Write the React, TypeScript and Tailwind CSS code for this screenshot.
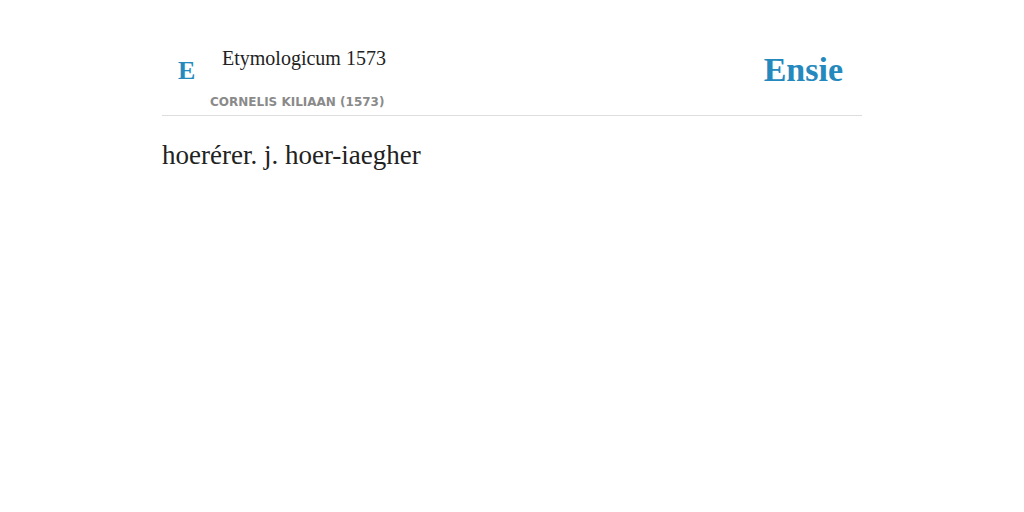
export default function App() {
  return (
    <div className="min-h-[512px] bg-white">
      <div className="mx-auto w-[700px] pt-[40px]">
        <div className="flex items-start justify-between border-b border-[#dddddd] pb-[4px]">
          <div className="flex flex-col">
            <div className="flex items-start">
              <div className="w-[48px] pl-[16px] pt-[14px] font-['Liberation_Serif',serif] text-[26px] font-bold leading-[34px] text-[#2589bd]">
                E
              </div>
              <div className="pl-[12px] pt-[4px] font-['Liberation_Serif',serif] text-[20px] leading-[28px] text-[#222222]">
                Etymologicum 1573
              </div>
            </div>
            <div className="pl-[48px] pt-[5px] font-['DejaVu_Sans',sans-serif] text-[12px] font-bold leading-[18px] text-[#8a8a8a]">
              CORNELIS KILIAAN (1573)
            </div>
          </div>
          <div className="pr-[19px] pt-[10px] font-['Liberation_Serif',serif] text-[34px] font-bold leading-[40px] text-[#2589bd]">
            Ensie
          </div>
        </div>
        <p className="pt-[22px] font-['Liberation_Serif',serif] text-[27px] leading-[34px] text-[#222222]">
          hoerérer. j. hoer-iaegher
        </p>
      </div>
    </div>
  );
}
